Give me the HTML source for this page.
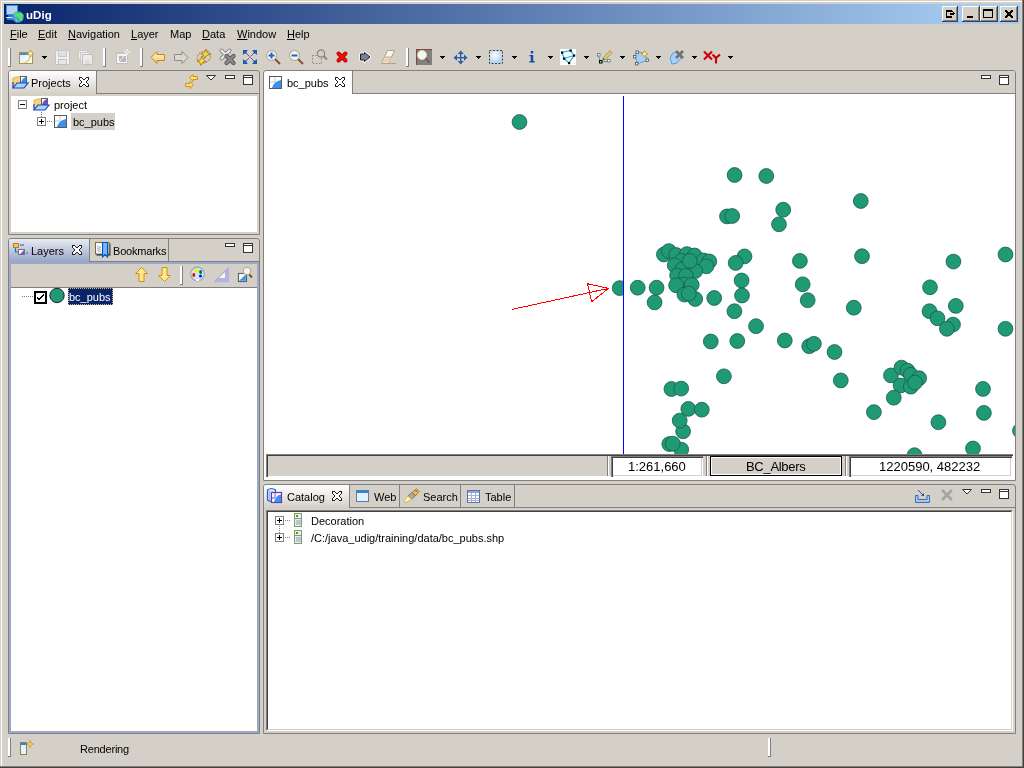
<!DOCTYPE html>
<html><head><meta charset="utf-8">
<style>
*{box-sizing:border-box}
html,body{margin:0;padding:0}
body{width:1024px;height:768px;position:relative;overflow:hidden;background:#d4d0c8;font-family:"Liberation Sans",sans-serif;font-size:11px;color:#000}
.a{position:absolute}
.t{position:absolute;white-space:nowrap;line-height:13px;font-size:11px;will-change:transform}
.u{text-decoration:underline}
.btn{position:absolute;background:#d4d0c8;box-shadow:inset -1px -1px 0 #404040,inset 1px 1px 0 #fff,inset -2px -2px 0 #808080}
.sepv{position:absolute;width:3px;background:linear-gradient(to right,#fff 0 2px,#808080 2px 3px);box-shadow:0 1px 0 #808080}
.dd{position:absolute;width:0;height:0;border-left:3px solid transparent;border-right:3px solid transparent;border-top:3px solid #000}
svg{position:absolute;overflow:visible}
</style></head><body>
<!-- window frame -->
<div class="a" style="left:1px;top:1px;width:1021px;height:1px;background:#fff"></div>
<div class="a" style="left:1px;top:1px;width:1px;height:765px;background:#fff"></div>
<div class="a" style="left:1022px;top:0;width:1px;height:767px;background:#808080"></div>
<div class="a" style="left:1023px;top:0;width:1px;height:768px;background:#404040"></div>
<div class="a" style="left:0;top:766px;width:1023px;height:1px;background:#808080"></div>
<div class="a" style="left:0;top:767px;width:1024px;height:1px;background:#404040"></div>
<!-- title bar -->
<div class="a" style="left:4px;top:4px;width:1016px;height:20px;background:linear-gradient(to right,#0a246a,#a6caf0 95%)"></div>
<div class="t" style="left:26px;top:7px;color:#fff;font-weight:bold;font-size:11.5px;line-height:16px;letter-spacing:0.1px">uDig</div>
<div class="btn" style="left:942px;top:6px;width:16px;height:16px"></div>
<div class="btn" style="left:962px;top:6px;width:18px;height:16px"></div>
<div class="btn" style="left:980px;top:6px;width:18px;height:16px"></div>
<div class="btn" style="left:1000px;top:6px;width:18px;height:16px"></div>
<!-- menu -->
<div class="t" style="left:10px;top:28px"><span class="u">F</span>ile</div>
<div class="t" style="left:38px;top:28px"><span class="u">E</span>dit</div>
<div class="t" style="left:68px;top:28px"><span class="u">N</span>avigation</div>
<div class="t" style="left:131px;top:28px"><span class="u">L</span>ayer</div>
<div class="t" style="left:170px;top:28px">Map</div>
<div class="t" style="left:202px;top:28px"><span class="u">D</span>ata</div>
<div class="t" style="left:237px;top:28px"><span class="u">W</span>indow</div>
<div class="t" style="left:287px;top:28px"><span class="u">H</span>elp</div>
<!-- toolbar separators -->
<div class="sepv" style="left:8px;top:48px;height:18px"></div>
<div class="sepv" style="left:103px;top:48px;height:18px"></div>
<div class="sepv" style="left:140px;top:48px;height:18px"></div>
<div class="sepv" style="left:406px;top:48px;height:18px"></div>
<!-- toolbar dropdowns -->










<!-- ===== Projects panel ===== -->
<div class="a" style="left:8px;top:70px;width:252px;height:165px;border:1px solid #808080;border-radius:3px 3px 0 0;background:#d4d0c8"></div>
<div class="a" style="left:9px;top:71px;width:87px;height:25px;background:linear-gradient(#fff,#d4d0c8 92%);border-radius:2px 0 0 0"></div>
<div class="a" style="left:96px;top:71px;width:1px;height:23px;background:#808080"></div>
<div class="a" style="left:96px;top:93px;width:163px;height:1px;background:#808080"></div>
<div class="a" style="left:11px;top:96px;width:246px;height:136px;background:#fff"></div>
<div class="t" style="left:31px;top:77px">Projects</div>
<div class="t" style="left:54px;top:99px">project</div>
<div class="a" style="left:71px;top:113px;width:44px;height:17px;background:#d4d0c8"></div>
<div class="t" style="left:73px;top:116px">bc_pubs</div>
<!-- ===== Layers panel ===== -->
<div class="a" style="left:8px;top:238px;width:252px;height:496px;border:1px solid #808080;border-radius:3px 3px 0 0;background:#d4d0c8"></div>
<div class="a" style="left:9px;top:239px;width:80px;height:23px;background:linear-gradient(#e8ebf4,#98a5c6);border-radius:2px 0 0 0"></div>
<div class="a" style="left:89px;top:239px;width:1px;height:23px;background:#808080"></div>
<div class="a" style="left:168px;top:239px;width:1px;height:23px;background:#808080"></div>
<div class="a" style="left:89px;top:261px;width:170px;height:1px;background:#808080"></div>
<div class="a" style="left:9px;top:262px;width:250px;height:471px;border:2px solid #9ca8c8"></div>
<div class="a" style="left:11px;top:287px;width:246px;height:1px;background:#808080"></div>
<div class="a" style="left:11px;top:288px;width:246px;height:443px;background:#fff"></div>
<div class="t" style="left:31px;top:245px">Layers</div>
<div class="t" style="left:113px;top:245px;letter-spacing:-0.2px">Bookmarks</div>
<div class="sepv" style="left:180px;top:266px;height:18px"></div>
<div class="a" style="left:68px;top:288px;width:45px;height:17px;background:#0a246a;outline:1px dotted #d8c060;outline-offset:-1px"></div>
<div class="t" style="left:69px;top:291px;color:#fff">bc_pubs</div>
<!-- ===== Editor panel ===== -->
<div class="a" style="left:263px;top:70px;width:753px;height:411px;border:1px solid #808080;border-radius:3px 3px 0 0;background:#fff"></div>
<div class="a" style="left:353px;top:71px;width:662px;height:22px;background:#d4d0c8;border-radius:0 2px 0 0"></div>
<div class="a" style="left:352px;top:71px;width:1px;height:23px;background:#808080"></div>
<div class="a" style="left:352px;top:93px;width:663px;height:1px;background:#808080"></div>
<div class="t" style="left:287px;top:77px">bc_pubs</div>
<!-- ===== Catalog panel ===== -->
<div class="a" style="left:263px;top:484px;width:753px;height:250px;border:1px solid #808080;border-radius:3px 3px 0 0;background:#d4d0c8"></div>
<div class="a" style="left:264px;top:485px;width:85px;height:25px;background:linear-gradient(#fff,#d4d0c8 92%);border-radius:2px 0 0 0"></div>
<div class="a" style="left:349px;top:485px;width:1px;height:23px;background:#808080"></div>
<div class="a" style="left:399px;top:485px;width:1px;height:22px;background:#808080"></div>
<div class="a" style="left:460px;top:485px;width:1px;height:22px;background:#808080"></div>
<div class="a" style="left:514px;top:485px;width:1px;height:22px;background:#808080"></div>
<div class="a" style="left:349px;top:507px;width:666px;height:1px;background:#808080"></div>
<div class="a" style="left:266px;top:510px;width:747px;height:221px;border-top:1px solid #808080;border-left:1px solid #808080;border-right:1px solid #fff;border-bottom:1px solid #fff"></div>
<div class="a" style="left:267px;top:511px;width:745px;height:219px;border-top:1px solid #404040;border-left:1px solid #404040;border-right:1px solid #d4d0c8;border-bottom:1px solid #d4d0c8;background:#fff"></div>
<div class="t" style="left:287px;top:491px">Catalog</div>
<div class="t" style="left:374px;top:491px">Web</div>
<div class="t" style="left:423px;top:491px">Search</div>
<div class="t" style="left:485px;top:491px">Table</div>
<div class="t" style="left:311px;top:515px">Decoration</div>
<div class="t" style="left:311px;top:532px">/C:/java_udig/training/data/bc_pubs.shp</div>
<!-- ===== bottom status ===== -->
<div class="sepv" style="left:8px;top:738px;height:18px"></div>
<div class="sepv" style="left:768px;top:738px;height:18px"></div>
<div class="t" style="left:80px;top:743px;letter-spacing:-0.2px">Rendering</div>
<!-- ===== map ===== -->
<svg style="left:264px;top:94px;overflow:hidden" width="751" height="360" viewBox="264 94 751 360">
<defs><clipPath id="cl"><rect x="264" y="94" width="359" height="360"/></clipPath></defs>
<circle cx="519.5" cy="122" r="7.4" fill="#209a75" stroke="#155c47" stroke-width="0.8"/>
<circle cx="734.6" cy="175" r="7.4" fill="#209a75" stroke="#155c47" stroke-width="0.8"/>
<circle cx="766.3" cy="176" r="7.4" fill="#209a75" stroke="#155c47" stroke-width="0.8"/>
<circle cx="727" cy="216.4" r="7.4" fill="#209a75" stroke="#155c47" stroke-width="0.8"/>
<circle cx="732.2" cy="216" r="7.4" fill="#209a75" stroke="#155c47" stroke-width="0.8"/>
<circle cx="783.2" cy="209.7" r="7.4" fill="#209a75" stroke="#155c47" stroke-width="0.8"/>
<circle cx="779" cy="224.3" r="7.4" fill="#209a75" stroke="#155c47" stroke-width="0.8"/>
<circle cx="860.8" cy="201" r="7.4" fill="#209a75" stroke="#155c47" stroke-width="0.8"/>
<circle cx="637.7" cy="287.7" r="7.4" fill="#209a75" stroke="#155c47" stroke-width="0.8"/>
<circle cx="656.6" cy="287.7" r="7.4" fill="#209a75" stroke="#155c47" stroke-width="0.8"/>
<circle cx="654.6" cy="302.4" r="7.4" fill="#209a75" stroke="#155c47" stroke-width="0.8"/>
<circle cx="663.9" cy="254.5" r="7.4" fill="#209a75" stroke="#155c47" stroke-width="0.8"/>
<circle cx="668.8" cy="251.1" r="7.4" fill="#209a75" stroke="#155c47" stroke-width="0.8"/>
<circle cx="676.1" cy="255" r="7.4" fill="#209a75" stroke="#155c47" stroke-width="0.8"/>
<circle cx="686.9" cy="254.1" r="7.4" fill="#209a75" stroke="#155c47" stroke-width="0.8"/>
<circle cx="694.7" cy="255.5" r="7.4" fill="#209a75" stroke="#155c47" stroke-width="0.8"/>
<circle cx="703.5" cy="260.4" r="7.4" fill="#209a75" stroke="#155c47" stroke-width="0.8"/>
<circle cx="709.3" cy="261.4" r="7.4" fill="#209a75" stroke="#155c47" stroke-width="0.8"/>
<circle cx="706.4" cy="266.3" r="7.4" fill="#209a75" stroke="#155c47" stroke-width="0.8"/>
<circle cx="681.5" cy="261" r="7.4" fill="#209a75" stroke="#155c47" stroke-width="0.8"/>
<circle cx="674.7" cy="265.3" r="7.4" fill="#209a75" stroke="#155c47" stroke-width="0.8"/>
<circle cx="695.2" cy="271.1" r="7.4" fill="#209a75" stroke="#155c47" stroke-width="0.8"/>
<circle cx="682.5" cy="269.2" r="7.4" fill="#209a75" stroke="#155c47" stroke-width="0.8"/>
<circle cx="689.8" cy="260.9" r="7.4" fill="#209a75" stroke="#155c47" stroke-width="0.8"/>
<circle cx="677.1" cy="275.5" r="7.4" fill="#209a75" stroke="#155c47" stroke-width="0.8"/>
<circle cx="685.9" cy="276" r="7.4" fill="#209a75" stroke="#155c47" stroke-width="0.8"/>
<circle cx="683.9" cy="284.5" r="7.4" fill="#209a75" stroke="#155c47" stroke-width="0.8"/>
<circle cx="691.7" cy="284.8" r="7.4" fill="#209a75" stroke="#155c47" stroke-width="0.8"/>
<circle cx="676.1" cy="285.3" r="7.4" fill="#209a75" stroke="#155c47" stroke-width="0.8"/>
<circle cx="695.2" cy="299" r="7.4" fill="#209a75" stroke="#155c47" stroke-width="0.8"/>
<circle cx="684.4" cy="294.6" r="7.4" fill="#209a75" stroke="#155c47" stroke-width="0.8"/>
<circle cx="688.8" cy="293.6" r="7.4" fill="#209a75" stroke="#155c47" stroke-width="0.8"/>
<circle cx="714.2" cy="298" r="7.4" fill="#209a75" stroke="#155c47" stroke-width="0.8"/>
<circle cx="744.5" cy="256.4" r="7.4" fill="#209a75" stroke="#155c47" stroke-width="0.8"/>
<circle cx="735.7" cy="262.9" r="7.4" fill="#209a75" stroke="#155c47" stroke-width="0.8"/>
<circle cx="741.6" cy="280.5" r="7.4" fill="#209a75" stroke="#155c47" stroke-width="0.8"/>
<circle cx="742" cy="295.5" r="7.4" fill="#209a75" stroke="#155c47" stroke-width="0.8"/>
<circle cx="734.4" cy="311.2" r="7.4" fill="#209a75" stroke="#155c47" stroke-width="0.8"/>
<circle cx="756" cy="326.2" r="7.4" fill="#209a75" stroke="#155c47" stroke-width="0.8"/>
<circle cx="799.9" cy="260.9" r="7.4" fill="#209a75" stroke="#155c47" stroke-width="0.8"/>
<circle cx="862" cy="256.2" r="7.4" fill="#209a75" stroke="#155c47" stroke-width="0.8"/>
<circle cx="802.7" cy="284.3" r="7.4" fill="#209a75" stroke="#155c47" stroke-width="0.8"/>
<circle cx="807.7" cy="300.2" r="7.4" fill="#209a75" stroke="#155c47" stroke-width="0.8"/>
<circle cx="853.8" cy="307.7" r="7.4" fill="#209a75" stroke="#155c47" stroke-width="0.8"/>
<circle cx="710.8" cy="341.5" r="7.4" fill="#209a75" stroke="#155c47" stroke-width="0.8"/>
<circle cx="737.3" cy="341" r="7.4" fill="#209a75" stroke="#155c47" stroke-width="0.8"/>
<circle cx="784.8" cy="340.5" r="7.4" fill="#209a75" stroke="#155c47" stroke-width="0.8"/>
<circle cx="809.2" cy="346.2" r="7.4" fill="#209a75" stroke="#155c47" stroke-width="0.8"/>
<circle cx="813.9" cy="343.8" r="7.4" fill="#209a75" stroke="#155c47" stroke-width="0.8"/>
<circle cx="834.5" cy="352" r="7.4" fill="#209a75" stroke="#155c47" stroke-width="0.8"/>
<circle cx="723.9" cy="376.3" r="7.4" fill="#209a75" stroke="#155c47" stroke-width="0.8"/>
<circle cx="840.8" cy="380.4" r="7.4" fill="#209a75" stroke="#155c47" stroke-width="0.8"/>
<circle cx="671.4" cy="389" r="7.4" fill="#209a75" stroke="#155c47" stroke-width="0.8"/>
<circle cx="681.2" cy="388.6" r="7.4" fill="#209a75" stroke="#155c47" stroke-width="0.8"/>
<circle cx="688.3" cy="408.9" r="7.4" fill="#209a75" stroke="#155c47" stroke-width="0.8"/>
<circle cx="701.8" cy="409.7" r="7.4" fill="#209a75" stroke="#155c47" stroke-width="0.8"/>
<circle cx="683.1" cy="431.3" r="7.4" fill="#209a75" stroke="#155c47" stroke-width="0.8"/>
<circle cx="679.7" cy="420.6" r="7.4" fill="#209a75" stroke="#155c47" stroke-width="0.8"/>
<circle cx="681.2" cy="449.6" r="7.4" fill="#209a75" stroke="#155c47" stroke-width="0.8"/>
<circle cx="669.3" cy="444.1" r="7.4" fill="#209a75" stroke="#155c47" stroke-width="0.8"/>
<circle cx="672.8" cy="443.6" r="7.4" fill="#209a75" stroke="#155c47" stroke-width="0.8"/>
<circle cx="953.4" cy="261.6" r="7.4" fill="#209a75" stroke="#155c47" stroke-width="0.8"/>
<circle cx="1005.5" cy="254.5" r="7.4" fill="#209a75" stroke="#155c47" stroke-width="0.8"/>
<circle cx="930" cy="287.3" r="7.4" fill="#209a75" stroke="#155c47" stroke-width="0.8"/>
<circle cx="929.5" cy="311.2" r="7.4" fill="#209a75" stroke="#155c47" stroke-width="0.8"/>
<circle cx="937.5" cy="318.3" r="7.4" fill="#209a75" stroke="#155c47" stroke-width="0.8"/>
<circle cx="955.8" cy="305.9" r="7.4" fill="#209a75" stroke="#155c47" stroke-width="0.8"/>
<circle cx="953" cy="324.6" r="7.4" fill="#209a75" stroke="#155c47" stroke-width="0.8"/>
<circle cx="946.9" cy="328.8" r="7.4" fill="#209a75" stroke="#155c47" stroke-width="0.8"/>
<circle cx="1005.5" cy="328.8" r="7.4" fill="#209a75" stroke="#155c47" stroke-width="0.8"/>
<circle cx="891" cy="375.4" r="7.4" fill="#209a75" stroke="#155c47" stroke-width="0.8"/>
<circle cx="901.5" cy="367.6" r="7.4" fill="#209a75" stroke="#155c47" stroke-width="0.8"/>
<circle cx="907.4" cy="370.6" r="7.4" fill="#209a75" stroke="#155c47" stroke-width="0.8"/>
<circle cx="910.8" cy="374.8" r="7.4" fill="#209a75" stroke="#155c47" stroke-width="0.8"/>
<circle cx="919.2" cy="378.2" r="7.4" fill="#209a75" stroke="#155c47" stroke-width="0.8"/>
<circle cx="900.6" cy="385.5" r="7.4" fill="#209a75" stroke="#155c47" stroke-width="0.8"/>
<circle cx="910.8" cy="386.7" r="7.4" fill="#209a75" stroke="#155c47" stroke-width="0.8"/>
<circle cx="915" cy="382.5" r="7.4" fill="#209a75" stroke="#155c47" stroke-width="0.8"/>
<circle cx="893.8" cy="397.7" r="7.4" fill="#209a75" stroke="#155c47" stroke-width="0.8"/>
<circle cx="873.9" cy="412.1" r="7.4" fill="#209a75" stroke="#155c47" stroke-width="0.8"/>
<circle cx="983" cy="388.9" r="7.4" fill="#209a75" stroke="#155c47" stroke-width="0.8"/>
<circle cx="983.9" cy="412.9" r="7.4" fill="#209a75" stroke="#155c47" stroke-width="0.8"/>
<circle cx="938.4" cy="422.2" r="7.4" fill="#209a75" stroke="#155c47" stroke-width="0.8"/>
<circle cx="973" cy="448.5" r="7.4" fill="#209a75" stroke="#155c47" stroke-width="0.8"/>
<circle cx="914.5" cy="455.2" r="7.4" fill="#209a75" stroke="#155c47" stroke-width="0.8"/>
<circle cx="1020" cy="430.7" r="7.4" fill="#209a75" stroke="#155c47" stroke-width="0.8"/>
<circle cx="619.7" cy="288.1" r="7.4" fill="#209a75" stroke="#155c47" stroke-width="0.8" clip-path="url(#cl)"/>
<rect x="623" y="96" width="1" height="358" fill="#0000ff"/>
<g fill="none" stroke="#ff0000" stroke-width="1" shape-rendering="crispEdges"><line x1="512" y1="309.4" x2="608.5" y2="288.4"/><polygon points="587.5,283.8 608.5,288.4 591.6,301.8"/></g>
</svg>
<!-- title icon -->
<svg style="left:6px;top:5px" width="19" height="19" viewBox="0 0 19 19">
<rect x="0" y="0" width="12" height="10" fill="#3c8ce8"/>
<rect x="1" y="1" width="10" height="8" fill="#b4d4ec"/>
<rect x="2" y="10" width="6" height="2" fill="#2870d8"/>
<rect x="0" y="12" width="7" height="1" fill="#e0ecfc"/>
<rect x="1" y="13" width="6" height="2" fill="#3080e8"/>
<circle cx="12" cy="12" r="5.8" fill="#5890e8"/>
<path d="M8 9L10 7L13 8.5L15 7.5L17.5 10L16 13L17 15L14 16L13 13L11 11.5L9 12Z" fill="#48ec58"/>
<path d="M9.5 13L11 13.5L11.5 16.5L10.5 17.5L9.5 15Z" fill="#48ec58"/>
</svg>
<!-- caption button glyphs -->
<svg style="left:942px;top:6px" width="16" height="16" viewBox="0 0 16 16" shape-rendering="crispEdges">
<path d="M4 4h6v2h-5v4h5v2h-6z" fill="#000"/><rect x="8" y="7" width="4" height="2" fill="#000"/><path d="M11 6h1v1h1v1h-1v1h-1z" fill="#000"/><rect x="10" y="5" width="1" height="1" fill="#000"/>
</svg>
<svg style="left:962px;top:6px" width="18" height="16" viewBox="0 0 18 16" shape-rendering="crispEdges">
<rect x="5" y="10" width="6" height="2" fill="#000"/>
</svg>
<svg style="left:980px;top:6px" width="18" height="16" viewBox="0 0 18 16" shape-rendering="crispEdges">
<path d="M3 3h10v9h-10z M4 5v6h8v-6z" fill="#000" fill-rule="evenodd"/>
</svg>
<svg style="left:1000px;top:6px" width="18" height="16" viewBox="0 0 18 16" shape-rendering="crispEdges"><g fill="#000"><rect x="5" y="4" width="1" height="1"/><rect x="6" y="4" width="1" height="1"/><rect x="11" y="4" width="1" height="1"/><rect x="12" y="4" width="1" height="1"/><rect x="5" y="5" width="1" height="1"/><rect x="6" y="5" width="1" height="1"/><rect x="7" y="5" width="1" height="1"/><rect x="10" y="5" width="1" height="1"/><rect x="11" y="5" width="1" height="1"/><rect x="12" y="5" width="1" height="1"/><rect x="6" y="6" width="1" height="1"/><rect x="7" y="6" width="1" height="1"/><rect x="8" y="6" width="1" height="1"/><rect x="9" y="6" width="1" height="1"/><rect x="10" y="6" width="1" height="1"/><rect x="11" y="6" width="1" height="1"/><rect x="7" y="7" width="1" height="1"/><rect x="8" y="7" width="1" height="1"/><rect x="9" y="7" width="1" height="1"/><rect x="10" y="7" width="1" height="1"/><rect x="7" y="8" width="1" height="1"/><rect x="8" y="8" width="1" height="1"/><rect x="9" y="8" width="1" height="1"/><rect x="10" y="8" width="1" height="1"/><rect x="6" y="9" width="1" height="1"/><rect x="7" y="9" width="1" height="1"/><rect x="8" y="9" width="1" height="1"/><rect x="9" y="9" width="1" height="1"/><rect x="10" y="9" width="1" height="1"/><rect x="11" y="9" width="1" height="1"/><rect x="5" y="10" width="1" height="1"/><rect x="6" y="10" width="1" height="1"/><rect x="7" y="10" width="1" height="1"/><rect x="10" y="10" width="1" height="1"/><rect x="11" y="10" width="1" height="1"/><rect x="12" y="10" width="1" height="1"/><rect x="5" y="11" width="1" height="1"/><rect x="6" y="11" width="1" height="1"/><rect x="11" y="11" width="1" height="1"/><rect x="12" y="11" width="1" height="1"/></g></svg>
<svg style="left:79px;top:77px" width="10" height="10" viewBox="0 0 10 10" shape-rendering="crispEdges"><path d="M0.5 0.5H2.5L5 3L7.5 0.5H9.5V2.5L7 5L9.5 7.5V9.5H7.5L5 7L2.5 9.5H0.5V7.5L3 5L0.5 2.5Z" fill="#fff" stroke="#222" stroke-width="1"/></svg>
<svg style="left:72px;top:245px" width="10" height="10" viewBox="0 0 10 10" shape-rendering="crispEdges"><path d="M0.5 0.5H2.5L5 3L7.5 0.5H9.5V2.5L7 5L9.5 7.5V9.5H7.5L5 7L2.5 9.5H0.5V7.5L3 5L0.5 2.5Z" fill="#fff" stroke="#222" stroke-width="1"/></svg>
<svg style="left:335px;top:77px" width="10" height="10" viewBox="0 0 10 10" shape-rendering="crispEdges"><path d="M0.5 0.5H2.5L5 3L7.5 0.5H9.5V2.5L7 5L9.5 7.5V9.5H7.5L5 7L2.5 9.5H0.5V7.5L3 5L0.5 2.5Z" fill="#fff" stroke="#222" stroke-width="1"/></svg>
<svg style="left:332px;top:491px" width="10" height="10" viewBox="0 0 10 10" shape-rendering="crispEdges"><path d="M0.5 0.5H2.5L5 3L7.5 0.5H9.5V2.5L7 5L9.5 7.5V9.5H7.5L5 7L2.5 9.5H0.5V7.5L3 5L0.5 2.5Z" fill="#fff" stroke="#222" stroke-width="1"/></svg>
<svg style="left:225px;top:75px" width="10" height="4" viewBox="0 0 10 4" shape-rendering="crispEdges"><rect x="0.5" y="0.5" width="9" height="3" fill="#fff" stroke="#333"/></svg>
<svg style="left:243px;top:75px" width="10" height="10" viewBox="0 0 10 10" shape-rendering="crispEdges"><rect x="0.5" y="0.5" width="9" height="9" fill="#fff" stroke="#333"/><rect x="1" y="2" width="8" height="1" fill="#333"/></svg>
<svg style="left:225px;top:243px" width="10" height="4" viewBox="0 0 10 4" shape-rendering="crispEdges"><rect x="0.5" y="0.5" width="9" height="3" fill="#fff" stroke="#333"/></svg>
<svg style="left:243px;top:243px" width="10" height="10" viewBox="0 0 10 10" shape-rendering="crispEdges"><rect x="0.5" y="0.5" width="9" height="9" fill="#fff" stroke="#333"/><rect x="1" y="2" width="8" height="1" fill="#333"/></svg>
<svg style="left:981px;top:75px" width="10" height="4" viewBox="0 0 10 4" shape-rendering="crispEdges"><rect x="0.5" y="0.5" width="9" height="3" fill="#fff" stroke="#333"/></svg>
<svg style="left:999px;top:75px" width="10" height="10" viewBox="0 0 10 10" shape-rendering="crispEdges"><rect x="0.5" y="0.5" width="9" height="9" fill="#fff" stroke="#333"/><rect x="1" y="2" width="8" height="1" fill="#333"/></svg>
<svg style="left:962px;top:489px" width="11" height="6" viewBox="0 0 11 6"><path d="M0.5 0.5H9.5L5 5Z" fill="#fff" stroke="#333" stroke-width="1"/></svg>
<svg style="left:981px;top:489px" width="10" height="4" viewBox="0 0 10 4" shape-rendering="crispEdges"><rect x="0.5" y="0.5" width="9" height="3" fill="#fff" stroke="#333"/></svg>
<svg style="left:999px;top:489px" width="10" height="10" viewBox="0 0 10 10" shape-rendering="crispEdges"><rect x="0.5" y="0.5" width="9" height="9" fill="#fff" stroke="#333"/><rect x="1" y="2" width="8" height="1" fill="#333"/></svg>
<svg style="left:206px;top:75px" width="11" height="6" viewBox="0 0 11 6"><path d="M0.5 0.5H9.5L5 5Z" fill="#fff" stroke="#333" stroke-width="1"/></svg>
<svg style="left:184px;top:74px" width="15" height="15" viewBox="0 0 15 15"><path d="M5.5 3.5L9 0.5V2.5H13.5V5.5H9V7.5Z" fill="#fbe07a" stroke="#d09010"/><path d="M9.5 10.5L6 7.5V9.5H1.5V12.5H6V14.5Z" fill="#fbe07a" stroke="#d09010"/></svg>
<svg style="left:18px;top:100px" width="9" height="9" viewBox="0 0 9 9" shape-rendering="crispEdges"><rect x="0.5" y="0.5" width="8" height="8" fill="#fff" stroke="#808080"/><rect x="2" y="4" width="5" height="1" fill="#000"/></svg>
<svg style="left:33px;top:98px" width="17" height="13" viewBox="0 0 17 13"><path d="M1 2H3L4 1H8L9 2V10H1Z" fill="#f6d27a" stroke="#d8a848" stroke-width="0.8"/><rect x="8.5" y="0.5" width="6" height="7" fill="#fff" stroke="#606060"/><path d="M9 7Q10 2 14 1V7Z" fill="#7850c0"/><path d="M1 12L5 7H16L12 12Z" fill="#a8d4f8" stroke="#1c44c0" stroke-width="1.2"/><path d="M1 6V12" stroke="#1c44c0" stroke-width="1.2"/></svg>
<div class="a" style="left:41px;top:112px;width:1px;height:5px;background:repeating-linear-gradient(#808080 0 1px,transparent 1px 2px)"></div>
<svg style="left:37px;top:117px" width="9" height="9" viewBox="0 0 9 9" shape-rendering="crispEdges"><rect x="0.5" y="0.5" width="8" height="8" fill="#fff" stroke="#808080"/><rect x="2" y="4" width="5" height="1" fill="#000"/><rect x="4" y="2" width="1" height="5" fill="#000"/></svg>
<div class="a" style="left:47px;top:121px;width:6px;height:1px;background:repeating-linear-gradient(to right,#808080 0 1px,transparent 1px 2px)"></div>
<svg style="left:54px;top:115px" width="13" height="13" viewBox="0 0 13 13"><rect x="0.5" y="0.5" width="12" height="12" fill="#fff" stroke="#5a5a5a"/><path d="M6 1V6H1" fill="none" stroke="#c8c8c8"/><path d="M12 4 Q5 5 3 12 H12Z" fill="#3a90ee"/></svg>
<svg style="left:12px;top:76px" width="17" height="13" viewBox="0 0 17 13"><path d="M1 2H3L4 1H8L9 2V10H1Z" fill="#f6d27a" stroke="#d8a848" stroke-width="0.8"/><rect x="8.5" y="0.5" width="6" height="7" fill="#fff" stroke="#606060"/><path d="M9 7Q10 2 14 1V7Z" fill="#3a90ee"/><path d="M1 12L5 7H16L12 12Z" fill="#a8d4f8" stroke="#1c44c0" stroke-width="1.2"/><path d="M1 6V12" stroke="#1c44c0" stroke-width="1.2"/></svg>
<svg style="left:269px;top:76px" width="13" height="13" viewBox="0 0 13 13"><rect x="0.5" y="0.5" width="12" height="12" fill="#fff" stroke="#5a5a5a"/><path d="M6 1V6H1" fill="none" stroke="#c8c8c8"/><path d="M12 4 Q5 5 3 12 H12Z" fill="#3a90ee"/></svg>
<svg style="left:13px;top:243px" width="16" height="13" viewBox="0 0 16 13"><rect x="0.5" y="0.5" width="5" height="4" fill="#f6c060" stroke="#c08020"/><path d="M2.5 5V9H5" fill="none" stroke="#2070d0" stroke-width="1.2"/><path d="M7 2H11" stroke="#2070d0" stroke-width="1.2"/><rect x="5.5" y="6.5" width="6" height="5" fill="#fff" stroke="#707070"/><path d="M7 11L11 7V11Z" fill="#8050d0"/><path d="M13 10H15" stroke="#2070d0" stroke-width="1.2"/></svg>
<svg style="left:95px;top:242px" width="16" height="16" viewBox="0 0 16 16"><rect x="1.5" y="12" width="14" height="1.6" fill="#2c3454"/><rect x="14" y="1.5" width="1.6" height="11" fill="#4a5878"/><rect x="0.5" y="0.5" width="13.5" height="11.5" fill="#fdfdff" stroke="#7c6c3c" stroke-width="1"/><path d="M2 4.5H4.5M3.5 5.5H6M2 6.5H4.5M3.5 7.5H6M2 8.5H4.5M3.5 9.5H6" stroke="#a8b4cc" stroke-width="0.9"/><path d="M7.5 0.5H12.5V15L10 12.5L7.5 15Z" fill="#78b8f8" stroke="#0050c8" stroke-width="1.1"/></svg>
<svg style="left:135px;top:267px" width="13" height="15" viewBox="0 0 13 15"><path d="M6.5 0.5L12.5 6.5H9V14.5H4V6.5H0.5Z" fill="#fde890" stroke="#d09010"/></svg>
<svg style="left:158px;top:267px" width="13" height="15" viewBox="0 0 13 15"><path d="M6.5 14.5L12.5 8.5H9V0.5H4V8.5H0.5Z" fill="#fde890" stroke="#d09010"/></svg>
<svg style="left:190px;top:266px" width="16" height="16" viewBox="0 0 16 16"><circle cx="7.5" cy="8" r="6.8" fill="#cfe6f6" stroke="#98a8b8" stroke-width="1.2"/><path d="M4.5 3.5Q7 2 8.5 4.5L6.5 6.5Z" fill="#f0f000"/><ellipse cx="6.2" cy="4.8" rx="2.2" ry="1.6" fill="#f4f000"/><ellipse cx="10.6" cy="6" rx="1.5" ry="2" fill="#0a7a10"/><ellipse cx="3.8" cy="9" rx="1.4" ry="2" fill="#f00000"/><ellipse cx="10.5" cy="10" rx="1.5" ry="1.5" fill="#0010f0"/><rect x="6" y="13" width="3" height="2" fill="#fff"/></svg>
<svg style="left:213px;top:266px" width="17" height="17" viewBox="0 0 17 17"><path d="M0.5 16.5L16 1V16.5Z" fill="#8a88c4"/><path d="M1.5 16L15.5 2V16Z" fill="#b4b4dc"/><path d="M6 12L12 6V12Z" fill="#f8f8fc"/><path d="M16 1V16.5H0.5" fill="none" stroke="#c8c8e8" stroke-width="1"/></svg>
<svg style="left:237px;top:266px" width="17" height="17" viewBox="0 0 17 17"><rect x="1.5" y="7.5" width="8" height="8" fill="#fff" stroke="#5c6470" stroke-width="1.2"/><path d="M2.2 14.8L8.8 8.2V14.8Z" fill="#3a92f0"/><path d="M12 8L15 11.5" stroke="#6a5a30" stroke-width="2"/><circle cx="10" cy="5" r="3.8" fill="#eef4fa" stroke="#b8a870" stroke-width="1"/></svg>
<svg style="left:34px;top:291px" width="13" height="13" viewBox="0 0 13 13" shape-rendering="crispEdges"><rect x="1" y="1" width="11" height="11" fill="#fff" stroke="#000" stroke-width="2"/><path d="M3 5.5L5 7.5L9.5 3V5L5 9.5L3 7.5Z" fill="#000"/></svg>
<svg style="left:49px;top:288px" width="16" height="16" viewBox="0 0 16 16"><circle cx="8" cy="7.5" r="7.2" fill="#209a75" stroke="#111" stroke-width="0.9"/></svg>
<div class="a" style="left:22px;top:296px;width:11px;height:1px;background:repeating-linear-gradient(to right,#808080 0 1px,transparent 1px 2px)"></div>
<svg style="left:266px;top:487px" width="17" height="17" viewBox="0 0 17 17"><path d="M1.5 3Q5.5 0 9.5 3V13Q5.5 16 1.5 13Z" fill="#d4e4f8" stroke="#2060c8" stroke-width="1.2"/><path d="M3.5 4V13" stroke="#9cb8e8" stroke-width="1.2"/><rect x="5.5" y="5.5" width="10" height="10" fill="#fff" stroke="#6838a8" stroke-width="1.2"/><path d="M15 7.5Q9.5 8.5 8 15H15Z" fill="#3a92f2"/><path d="M9 6V11H6" fill="none" stroke="#7a58b8" stroke-width="1"/></svg>
<svg style="left:356px;top:490px" width="13" height="12" viewBox="0 0 13 12" shape-rendering="crispEdges"><rect x="0.5" y="0.5" width="12" height="11" fill="#e4f2fc" stroke="#5080b0"/><rect x="1" y="1" width="11" height="2" fill="#3a80d0"/></svg>
<svg style="left:403px;top:488px" width="17" height="15" viewBox="0 0 17 15"><path d="M9 4.5L13.5 0.7L16.3 3.3L12.3 8Z" fill="#f4b848" stroke="#b07018" stroke-width="0.9"/><path d="M4.8 8L9 4.5L12.3 8L8.5 11.5Z" fill="#a8a8b0" stroke="#807868" stroke-width="0.9"/><path d="M0.8 13L4.8 8L8.5 11.5L3 14.5Z" fill="#fff4b8" stroke="#d8b050" stroke-width="0.9"/><rect x="12.5" y="2.5" width="1.3" height="1.3" fill="#2050c0"/></svg>
<svg style="left:467px;top:490px" width="13" height="13" viewBox="0 0 13 13" shape-rendering="crispEdges"><rect x="0.5" y="0.5" width="12" height="12" fill="#fff" stroke="#5c74a4"/><rect x="1" y="1" width="11" height="2" fill="#90a8d0"/><path d="M1 5.5H12M1 8H12M1 10.5H12M4.5 3V12M8.5 3V12" stroke="#a4b4d4" stroke-width="1"/></svg>
<svg style="left:275px;top:516px" width="9" height="9" viewBox="0 0 9 9" shape-rendering="crispEdges"><rect x="0.5" y="0.5" width="8" height="8" fill="#fff" stroke="#808080"/><rect x="2" y="4" width="5" height="1" fill="#000"/><rect x="4" y="2" width="1" height="5" fill="#000"/></svg>
<div class="a" style="left:285px;top:520px;width:6px;height:1px;background:repeating-linear-gradient(to right,#808080 0 1px,transparent 1px 2px)"></div>
<svg style="left:294px;top:513px" width="8" height="14" viewBox="0 0 8 14" shape-rendering="crispEdges"><rect x="0.5" y="0.5" width="7" height="13" rx="1" fill="#e8ecf0" stroke="#8a9a6a"/><rect x="2" y="2" width="2" height="2" fill="#10c010"/><rect x="1" y="4.5" width="6" height="1" fill="#8a9a6a"/><rect x="1.5" y="7" width="5" height="5" fill="#b8c4e0"/></svg>
<svg style="left:275px;top:533px" width="9" height="9" viewBox="0 0 9 9" shape-rendering="crispEdges"><rect x="0.5" y="0.5" width="8" height="8" fill="#fff" stroke="#808080"/><rect x="2" y="4" width="5" height="1" fill="#000"/><rect x="4" y="2" width="1" height="5" fill="#000"/></svg>
<div class="a" style="left:285px;top:537px;width:6px;height:1px;background:repeating-linear-gradient(to right,#808080 0 1px,transparent 1px 2px)"></div>
<svg style="left:294px;top:530px" width="8" height="14" viewBox="0 0 8 14" shape-rendering="crispEdges"><rect x="0.5" y="0.5" width="7" height="13" rx="1" fill="#e8ecf0" stroke="#8a9a6a"/><rect x="2" y="2" width="2" height="2" fill="#10c010"/><rect x="1" y="4.5" width="6" height="1" fill="#8a9a6a"/><rect x="1.5" y="7" width="5" height="5" fill="#b8c4e0"/></svg>
<div class="a" style="left:279px;top:526px;width:1px;height:7px;background:repeating-linear-gradient(#808080 0 1px,transparent 1px 2px)"></div>
<svg style="left:914px;top:489px" width="17" height="15" viewBox="0 0 17 15"><path d="M1.5 6.5V13.5H15.5V6.5H13V10.5H4V6.5Z" fill="#a8c8f0" stroke="#3c6cb8"/><path d="M4 1L9.5 6.5" stroke="#2050a0" stroke-width="1"/><path d="M7 7H10V4Z" fill="#2050a0"/></svg>
<svg style="left:941px;top:489px" width="12" height="12" viewBox="0 0 12 12"><path d="M2 1L6 5L10 1L11 2L7 6L11 10L10 11L6 7L2 11L1 10L5 6L1 2Z" fill="#b8b8b8" stroke="#a0a0a0" stroke-width="1.2"/></svg>
<svg style="left:20px;top:740px" width="14" height="15" viewBox="0 0 14 15"><rect x="0.5" y="2.5" width="6" height="12" fill="#e8f4fc" stroke="#8a8060"/><rect x="1" y="3" width="5" height="2" fill="#3a80d0"/><path d="M10 0.5L11 3L13.5 4L11 5L10 7.5L9 5L6.5 4L9 3Z" fill="#f8d860" stroke="#c09020" stroke-width="0.7"/></svg>
<!-- ===== map status bar ===== -->
<div class="a" style="left:266px;top:454px;width:747px;height:23px;background:#d4d0c8;box-shadow:inset 1px 1px 0 #808080,inset 2px 2px 0 #404040,inset -1px -1px 0 #fff"></div>
<div class="a" style="left:607px;top:456px;width:1px;height:20px;background:#808080"></div>
<div class="a" style="left:608px;top:456px;width:1px;height:20px;background:#fff"></div>
<div class="a" style="left:611px;top:456px;width:92px;height:21px;background:#fff;box-shadow:inset 1px 1px 0 #808080,inset 2px 2px 0 #404040,inset -1px -1px 0 #fff,inset -2px -2px 0 #d4d0c8"></div>
<div class="a" style="left:706px;top:456px;width:1px;height:20px;background:#808080"></div>
<div class="a" style="left:707px;top:456px;width:1px;height:20px;background:#fff"></div>
<div class="a" style="left:710px;top:456px;width:132px;height:20px;background:#d4d0c8;border:1px solid #000;box-shadow:inset 1px 1px 0 #fff,inset -1px -1px 0 #fff"></div>
<div class="a" style="left:845px;top:456px;width:1px;height:20px;background:#808080"></div>
<div class="a" style="left:846px;top:456px;width:1px;height:20px;background:#fff"></div>
<div class="a" style="left:849px;top:456px;width:163px;height:21px;background:#fff;box-shadow:inset 1px 1px 0 #808080,inset 2px 2px 0 #404040,inset -1px -1px 0 #fff,inset -2px -2px 0 #d4d0c8"></div>
<div class="t" style="left:628px;top:460px;font-size:13px">1:261,660</div>
<div class="t" style="left:746px;top:460px;font-size:13px;letter-spacing:-0.3px">BC_Albers</div>
<div class="t" style="left:879px;top:460px;font-size:13px">1220590, 482232</div>
<svg style="left:42px;top:56px" width="5" height="3" viewBox="0 0 5 3" shape-rendering="crispEdges"><path d="M0 0H5V1H4V2H3V3H2V2H1V1H0Z" fill="#000"/></svg>
<svg style="left:440px;top:56px" width="5" height="3" viewBox="0 0 5 3" shape-rendering="crispEdges"><path d="M0 0H5V1H4V2H3V3H2V2H1V1H0Z" fill="#000"/></svg>
<svg style="left:476px;top:56px" width="5" height="3" viewBox="0 0 5 3" shape-rendering="crispEdges"><path d="M0 0H5V1H4V2H3V3H2V2H1V1H0Z" fill="#000"/></svg>
<svg style="left:512px;top:56px" width="5" height="3" viewBox="0 0 5 3" shape-rendering="crispEdges"><path d="M0 0H5V1H4V2H3V3H2V2H1V1H0Z" fill="#000"/></svg>
<svg style="left:548px;top:56px" width="5" height="3" viewBox="0 0 5 3" shape-rendering="crispEdges"><path d="M0 0H5V1H4V2H3V3H2V2H1V1H0Z" fill="#000"/></svg>
<svg style="left:584px;top:56px" width="5" height="3" viewBox="0 0 5 3" shape-rendering="crispEdges"><path d="M0 0H5V1H4V2H3V3H2V2H1V1H0Z" fill="#000"/></svg>
<svg style="left:620px;top:56px" width="5" height="3" viewBox="0 0 5 3" shape-rendering="crispEdges"><path d="M0 0H5V1H4V2H3V3H2V2H1V1H0Z" fill="#000"/></svg>
<svg style="left:656px;top:56px" width="5" height="3" viewBox="0 0 5 3" shape-rendering="crispEdges"><path d="M0 0H5V1H4V2H3V3H2V2H1V1H0Z" fill="#000"/></svg>
<svg style="left:692px;top:56px" width="5" height="3" viewBox="0 0 5 3" shape-rendering="crispEdges"><path d="M0 0H5V1H4V2H3V3H2V2H1V1H0Z" fill="#000"/></svg>
<svg style="left:728px;top:56px" width="5" height="3" viewBox="0 0 5 3" shape-rendering="crispEdges"><path d="M0 0H5V1H4V2H3V3H2V2H1V1H0Z" fill="#000"/></svg>
<svg style="left:19px;top:50px" width="16" height="15" viewBox="0 0 16 15"><defs><linearGradient id="gn" x1="0" y1="0" x2="1" y2="1"><stop offset="0" stop-color="#d8f0ff"/><stop offset="1" stop-color="#ffffff"/></linearGradient></defs><rect x="0.5" y="2.5" width="13" height="11" fill="url(#gn)" stroke="#a89060"/><rect x="1" y="3" width="10" height="2" fill="#4a88d0"/><path d="M4 13Q11 12 11 6" fill="none" stroke="#f0c840" stroke-width="1.2"/><path d="M11.5 0L12.7 2.3L15 3.5L12.7 4.7L11.5 7L10.3 4.7L8 3.5L10.3 2.3Z" fill="#fff4b0" stroke="#c09020" stroke-width="0.8"/></svg>
<svg style="left:55px;top:50px" width="15" height="15" viewBox="0 0 15 15"><rect x="0.5" y="0.5" width="14" height="14" fill="#f0f0f0" stroke="#c4c4c4"/><rect x="3.5" y="0.5" width="8" height="6" fill="#e0e0e0" stroke="#c8c8c8"/><rect x="3.5" y="9.5" width="8" height="5" fill="#e8e8e8" stroke="#c0c0c0"/></svg>
<svg style="left:78px;top:50px" width="15" height="15" viewBox="0 0 15 15"><rect x="0.5" y="0.5" width="9" height="9" fill="#f0f0f0" stroke="#c8c8c8"/><rect x="2.5" y="2.5" width="9" height="9" fill="#f0f0f0" stroke="#c8c8c8"/><rect x="4.5" y="4.5" width="10" height="10" fill="#ececec" stroke="#c0c0c0"/><rect x="7" y="10" width="5" height="4" fill="#dcdcdc"/></svg>
<svg style="left:116px;top:49px" width="14" height="15" viewBox="0 0 14 15"><rect x="0.5" y="3.5" width="11" height="11" fill="#f4f4f4" stroke="#c0c0c0"/><rect x="1" y="4" width="9" height="1" fill="#c8c8c8"/><rect x="3" y="7" width="7" height="6" fill="#b8b8b8"/><path d="M3 13L8 7" stroke="#fff" stroke-width="0.8"/><path d="M11 0V6M8 3H14" stroke="#ffffff" stroke-width="1.6"/><path d="M11 0.5V5.5M8.5 3H13.5" stroke="#c8c8c8" stroke-width="0.8"/></svg>
<svg style="left:150px;top:51px" width="16" height="13" viewBox="0 0 16 13"><defs><linearGradient id="gy" x1="0" y1="0" x2="0" y2="1"><stop offset="0" stop-color="#fff8dc"/><stop offset="1" stop-color="#f4c860"/></linearGradient></defs><path d="M1 6.5L7 0.5V3.5H14.5V9.5H7V12.5Z" fill="url(#gy)" stroke="#c88810" stroke-width="1"/></svg>
<svg style="left:173px;top:51px" width="16" height="13" viewBox="0 0 16 13"><path d="M15 6.5L9 0.5V3.5H1.5V9.5H9V12.5Z" fill="#dcd8d0" stroke="#8c8c8c" stroke-width="1"/></svg>
<svg style="left:194px;top:47px" width="20" height="20" viewBox="0 0 20 20"><ellipse cx="10" cy="10" rx="7.2" ry="5.6" transform="rotate(-30 10 10)" fill="none" stroke="#c89040" stroke-width="1.3" stroke-dasharray="2 1"/><path d="M12 2L13.5 6L16.5 7.5L12.5 8.5L11 11.5L9.5 8L7 7L10.5 5.5Z" fill="#f8e030" stroke="#906018" stroke-width="0.7"/><path d="M8 9L9.5 13L12 14.5L8.5 15.5L7 18.5L5.5 15L3 14L6.5 12.5Z" fill="#f8e030" stroke="#906018" stroke-width="0.7"/></svg>
<svg style="left:219px;top:48px" width="18" height="19" viewBox="0 0 18 19"><path d="M2.5 2.5L10.5 10.5M10.5 2.5L2.5 10.5" stroke="#8c8c8c" stroke-width="4" stroke-linecap="round"/><path d="M2.5 2.5L10.5 10.5M10.5 2.5L2.5 10.5" stroke="#ececec" stroke-width="2" stroke-linecap="round"/><path d="M7.5 8L14.5 15M14.5 8L7.5 15" stroke="#5c5c5c" stroke-width="4.4" stroke-linecap="round"/><path d="M7.5 8L14.5 15M14.5 8L7.5 15" stroke="#8a8a8a" stroke-width="2.4" stroke-linecap="round"/></svg>
<svg style="left:240px;top:48px" width="20" height="18" viewBox="0 0 20 18"><g fill="#1a5cb0"><path d="M3 2H8L6.5 3.5L7 4L5 6L4.5 5.5L3 7Z"/><path d="M17 2H12L13.5 3.5L13 4L15 6L15.5 5.5L17 7Z"/><path d="M3 16H8L6.5 14.5L7 14L5 12L4.5 12.5L3 11Z"/><path d="M17 16H12L13.5 14.5L13 14L15 12L15.5 12.5L17 11Z"/></g><path d="M5.5 4.5L9.5 8.5M14.5 4.5L10.5 8.5M5.5 13.5L9.5 9.5M14.5 13.5L10.5 9.5" stroke="#3838a0" stroke-width="0.8"/></svg>
<svg style="left:266px;top:50px" width="15" height="15" viewBox="0 0 15 15"><path d="M9 9L14 14" stroke="#80503a" stroke-width="2"/><circle cx="5.5" cy="5.5" r="5" fill="#eef4fc" stroke="#b0a070" stroke-width="1"/><rect x="2.5" y="4.5" width="6" height="2" fill="#2a62b8"/><rect x="4.5" y="2.5" width="2" height="6" fill="#2a62b8"/></svg>
<svg style="left:289px;top:50px" width="15" height="15" viewBox="0 0 15 15"><path d="M9 9L14 14" stroke="#80503a" stroke-width="2"/><circle cx="5.5" cy="5.5" r="5" fill="#eef4fc" stroke="#b0a070" stroke-width="1"/><rect x="2.5" y="4.5" width="6" height="2" fill="#2a62b8"/></svg>
<svg style="left:311px;top:49px" width="17" height="16" viewBox="0 0 17 16"><rect x="1.5" y="6.5" width="9" height="8" fill="none" stroke="#888" stroke-dasharray="1.5 1.5"/><circle cx="10" cy="4.5" r="3.6" fill="#d4d0c8" stroke="#888" stroke-width="1.2"/><path d="M12.5 7L16 10.5" stroke="#888" stroke-width="2"/></svg>
<svg style="left:336px;top:51px" width="12" height="12" viewBox="0 0 12 12"><path d="M2.5 2.5L9.5 9.5M9.5 2.5L2.5 9.5" stroke="#b00000" stroke-width="4" stroke-linecap="round"/><path d="M2.5 2.5L9.5 9.5M9.5 2.5L2.5 9.5" stroke="#ff0808" stroke-width="2.4" stroke-linecap="round"/></svg>
<svg style="left:359px;top:52px" width="13" height="11" viewBox="0 0 13 11"><path d="M1.5 2H5.5V0.5L11 5L5.5 9.5V8H1.5Z" fill="#7a8092" stroke="#fff" stroke-width="2.4" stroke-linejoin="round"/><path d="M1.5 2H5.5V0.5L11 5L5.5 9.5V8H1.5Z" fill="#7c8294" stroke="#1a1e2c" stroke-width="1"/></svg>
<svg style="left:381px;top:50px" width="16" height="15" viewBox="0 0 16 15"><path d="M0.5 13.5L6.5 0.5H13.5L7.5 13.5Z" fill="#faf6f0" stroke="#b8a07a" stroke-width="1"/><path d="M1.5 12.5L4.5 7H11L8 12.5Z" fill="#e4d4bc"/><path d="M4.5 7H11" stroke="#c0a888" stroke-width="0.9"/><path d="M7 13.5H15" stroke="#b8a07a" stroke-width="1"/></svg>
<svg style="left:416px;top:49px" width="16" height="16" viewBox="0 0 16 16"><rect x="0" y="0" width="16" height="16" fill="#808080"/><path d="M0.5 16V0.5H16" fill="none" stroke="#804838" stroke-width="1"/><path d="M9 9L13.5 13.5" stroke="#8a4a3a" stroke-width="1.6"/><circle cx="6" cy="6" r="4.5" fill="#f4f6fa" stroke="#e8e0b0" stroke-width="0.8"/></svg>
<svg style="left:453px;top:50px" width="15" height="15" viewBox="0 0 15 15"><g fill="#2a62a8"><rect x="7" y="2" width="1.4" height="11"/><rect x="2" y="7" width="11" height="1.4"/><path d="M7.7 0.5L10.8 4H4.6Z"/><path d="M7.7 14.5L10.8 11H4.6Z"/><path d="M0.5 7.7L4 4.6V10.8Z"/><path d="M14.5 7.7L11 4.6V10.8Z"/></g></svg>
<svg style="left:489px;top:50px" width="14" height="14" viewBox="0 0 14 14"><defs><radialGradient id="gs" cx="0.4" cy="0.35" r="0.7"><stop offset="0" stop-color="#ffffff"/><stop offset="1" stop-color="#a8d0f0"/></radialGradient></defs><rect x="1" y="1" width="12" height="12" fill="url(#gs)"/><rect x="0.5" y="0.5" width="13" height="13" fill="none" stroke="#404040" stroke-dasharray="2 1.5"/></svg>
<svg style="left:529px;top:50px" width="7" height="13" viewBox="0 0 7 13"><g fill="#1048a8"><rect x="1.8" y="1" width="2.4" height="2.4"/><path d="M0.5 5H4.2V11.2H5.8V12.5H0.3V11.2H1.8V6.3H0.5Z"/></g></svg>
<svg style="left:560px;top:49px" width="16" height="16" viewBox="0 0 16 16"><rect width="16" height="16" fill="#fff"/><path d="M2 3.5L10.5 1.5L14 6.5L9 14L4 9.5Z M4 9.5L14 6.5" fill="none" stroke="#20b0e8" stroke-width="1.2"/><g fill="#000"><rect x="1" y="2.5" width="2.2" height="2.2"/><rect x="9.5" y="0.5" width="2.2" height="2.2"/><rect x="13" y="5.5" width="2.2" height="2.2"/><rect x="8" y="13" width="2.2" height="2.2"/><rect x="3" y="8.5" width="2.2" height="2.2"/></g></svg>
<svg style="left:596px;top:49px" width="17" height="16" viewBox="0 0 17 16"><path d="M2.5 6.5L4.5 13M4.5 13L13.5 12" stroke="#3a9ad8" stroke-width="1" fill="none"/><rect x="1.5" y="4.5" width="2.5" height="2.5" fill="#fff" stroke="#707070" stroke-width="0.8"/><rect x="11.5" y="10.5" width="2.5" height="2.5" fill="#fff" stroke="#707070" stroke-width="0.8"/><rect x="3.5" y="11.5" width="2.5" height="2.5" fill="#f0e000" stroke="#000" stroke-width="1"/><path d="M7 9L14 1.5L16 3.5L9 11Z" fill="#e8c878" stroke="#a08040" stroke-width="0.8"/><path d="M6.5 10.5L7 9L9 11Z" fill="#203050"/></svg>
<svg style="left:633px;top:50px" width="16" height="16" viewBox="0 0 16 16"><path d="M4 2L11 3L15 10L5 13.5L1.5 6.5Z" fill="#a8d0f4" stroke="#50a0e0" stroke-width="1"/><g fill="#fff" stroke="#606060" stroke-width="0.9"><rect x="3" y="1" width="2.4" height="2.4"/><rect x="0.5" y="5.5" width="2.4" height="2.4"/><rect x="13" y="9" width="2.4" height="2.4"/><rect x="2.5" y="12.5" width="2.4" height="2.4"/></g><path d="M11.5 0.5L12.6 2.9L15 4L12.6 5.1L11.5 7.5L10.4 5.1L8 4L10.4 2.9Z" fill="#fff0a0" stroke="#c89010" stroke-width="0.8"/></svg>
<svg style="left:669px;top:49px" width="16" height="17" viewBox="0 0 16 17"><path d="M4 4L9 2.5L12 9L8 14L3 15L1 9Z" fill="#a8d0f4" stroke="#50a0e0" stroke-width="1"/><path d="M7 2L14 9M14 2L7 9" stroke="#707070" stroke-width="2.6"/></svg>
<svg style="left:703px;top:51px" width="18" height="13" viewBox="0 0 18 13"><path d="M1 0.5L9 8.5M9 0.5L1 8.5" stroke="#d00010" stroke-width="2.2"/><path d="M9.5 3.5L13 7M17 3.5L13 7V12.5" stroke="#d00010" stroke-width="2.2" fill="none"/></svg>
</body></html>
